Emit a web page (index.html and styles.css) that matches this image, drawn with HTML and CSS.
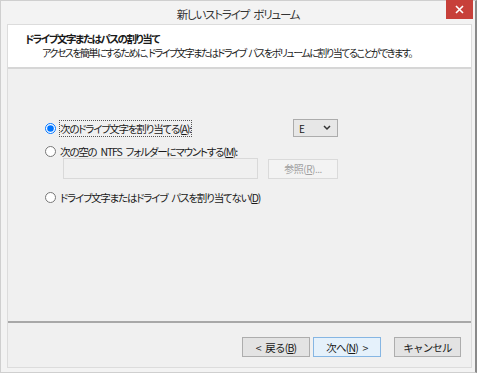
FILE: index.html
```html
<!DOCTYPE html>
<html lang="ja">
<head>
    <meta charset="UTF-8">
    <title>新しいストライプ ボリューム</title>
    <link rel="stylesheet" href="styles.css">
</head>
<body>
    <div class="window">
        <div class="titlebar">
            <span></span>
            <span class="title">新しいストライプ ボリューム</span>
            <button class="close" type="button">
                <svg width="9" height="9" viewBox="0 0 9 9"><path d="M1 1 L8 8 M8 1 L1 8" stroke="#fff" stroke-width="1.6"/></svg>
            </button>
        </div>
        <div class="client">
            <div class="header">
                <div class="heading">ドライブ文字またはパスの割り当て</div>
                <div class="subheading">アクセスを簡単にするために、ドライブ文字またはドライブ パスをボリュームに割り当てることができます。</div>
            </div>
            <div class="content">
                <div class="row first">
                    <label class="option"><input type="radio" name="assign" checked><span class="focus">次のドライブ文字を割り当てる(<u>A</u>):</span></label>
                    <div class="letter">
                        <span>E</span>
                        <svg width="8" height="6" viewBox="0 0 8 6"><path d="M1 1 L4 4 L7 1" fill="none" stroke="#333" stroke-width="1.5"/></svg>
                    </div>
                </div>
                <div class="row second">
                    <label class="option"><input type="radio" name="assign"><span>次の空の NTFS フォルダーにマウントする(<u>M</u>):</span></label>
                </div>
                <div class="row mount">
                    <input type="text" class="path" disabled>
                    <button type="button" class="browse" disabled>参照(<u>R</u>)...</button>
                </div>
                <div class="row third">
                    <label class="option"><input type="radio" name="assign"><span>ドライブ文字またはドライブ パスを割り当てない(<u>D</u>)</span></label>
                </div>
            </div>
            <div class="footer">
                <button type="button" class="btn">&lt; 戻る(<u>B</u>)</button>
                <button type="button" class="btn default">次へ(<u>N</u>) &gt;</button>
                <button type="button" class="btn cancel">キャンセル</button>
            </div>
        </div>
    </div>
</body>
</html>
```

FILE: styles.css
```css
body {
    margin: 0;
    padding: 0;
    background-color: #ffffff;
    font-family: "Noto Sans CJK JP", "Noto Sans", sans-serif;
    font-size: 10.5px;
    color: #1a1a1a;
    font-feature-settings: "palt";
    word-spacing: 3px;
}

.window {
    width: 474px;
    height: 371px;
    background-color: #f3f3f3;
    border: 1px solid #cfcfcf;
    border-right: 2px solid #8a8a8a;
    display: flex;
    flex-direction: column;
}

.titlebar {
    height: 23px;
    display: grid;
    grid-template-columns: 1fr auto 1fr;
    align-items: start;
}

.title {
    font-size: 11.5px;
    color: #333;
    padding-top: 5px;
    letter-spacing: -1.2px;
}

.close {
    justify-self: end;
    width: 27px;
    height: 19px;
    margin-top: -1px;
    margin-right: 2px;
    border: none;
    background-color: #c7403a;
    padding: 0;
    display: flex;
    align-items: center;
    justify-content: center;
}

.client {
    flex: 1;
    margin: 0 3px 4px 6px;
    background-color: #f0f0f0;
    border: 1px solid #dcdcdc;
    display: flex;
    flex-direction: column;
}

.header {
    height: 44px;
    background-color: #ffffff;
    border-bottom: 2px solid #d6d6d6;
    padding: 7px 0 0 17px;
    box-sizing: border-box;
    line-height: 14px;
}

.heading {
    font-weight: bold;
    font-size: 10.5px;
    letter-spacing: -1.5px;
}

.subheading {
    padding-left: 17px;
    font-size: 10px;
    letter-spacing: -1.5px;
    word-spacing: 2px;
    white-space: nowrap;
}

.content {
    height: 254px;
    padding: 49px 0 0 37px;
    box-sizing: border-box;
    border-bottom: 2px solid #a8a8a8;
}

.row {
    display: flex;
    align-items: center;
}

.first {
    height: 20px;
}

.second {
    margin-top: 6px;
    height: 14px;
}

.mount {
    height: 21px;
    padding-left: 18px;
}

.third {
    margin-top: 11px;
    height: 14px;
}

.option {
    display: flex;
    align-items: center;
    width: 248px;
    white-space: nowrap;
    letter-spacing: -1.2px;
}

.option input {
    margin: 0 4px 0 0;
    width: 11px;
    height: 11px;
}

.focus {
    outline: 1px dotted #555;
    outline-offset: 0;
}

.letter {
    width: 45px;
    height: 18px;
    display: flex;
    align-items: center;
    justify-content: space-between;
    padding: 0 6px 0 5px;
    box-sizing: border-box;
    font-size: 10px;
    border: 1px solid #acacac;
    background-color: #e7e7e7;
}

.path {
    width: 195px;
    height: 21px;
    box-sizing: border-box;
    border: 1px solid #d9d9d9;
    background-color: #f0f0f0;
}

.browse {
    margin-left: 10px;
    width: 70px;
    height: 20px;
    font-family: inherit;
    font-size: 10px;
    letter-spacing: -0.5px;
    color: #a0a0a0;
    border: 1px solid #dadada;
    background-color: #f3f3f3;
}

.footer {
    flex: 1;
    display: flex;
    justify-content: flex-end;
    align-items: center;
    padding: 4px 10px 0 0;
    gap: 3px;
}

.btn {
    width: 68px;
    height: 20px;
    font-family: inherit;
    font-size: 10.5px;
    letter-spacing: -0.8px;
    word-spacing: 3px;
    border: 1px solid #adadad;
    background-color: #e3e3e3;
    color: #1a1a1a;
    padding: 0;
}

.default {
    border-color: #86b6e3;
    background-color: #e5f1fb;
}

.cancel {
    width: 67px;
    margin-left: 10px;
}
```
